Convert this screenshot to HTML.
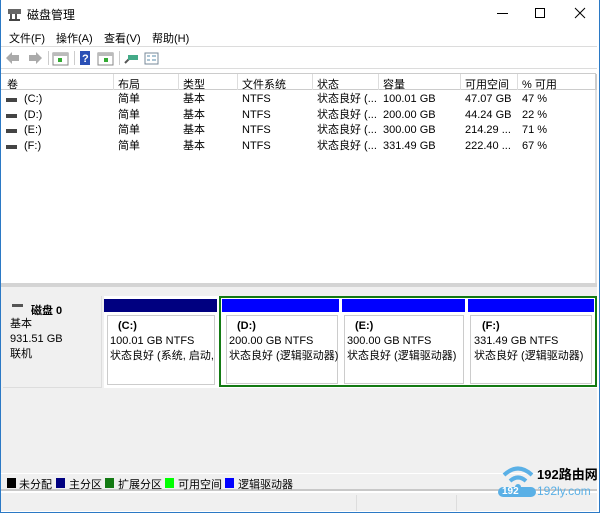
<!DOCTYPE html>
<html><head><meta charset="utf-8"><style>
*{margin:0;padding:0;box-sizing:border-box}
body{width:600px;height:513px;overflow:hidden;background:#fff;font-family:"Liberation Sans","Noto Sans CJK SC",sans-serif;font-size:11px;color:#000;position:relative}
.a{position:absolute}
.t{white-space:nowrap}
</style></head><body>
<div class="a" style="left:0;top:0;width:600px;height:513px;border:1px solid #2b79c5;border-top:none"></div>
<!-- title -->
<svg class="a" style="left:7px;top:8px" width="16" height="14"><rect x="1" y="1" width="13" height="5" fill="#666"/><rect x="3" y="6" width="2" height="6" fill="#555"/><rect x="8" y="6" width="2" height="6" fill="#555"/><rect x="2" y="11" width="11" height="2" fill="#444"/></svg>
<div class="a t" style="left:27px;top:6px;font-size:12px">磁盘管理</div>
<div class="a" style="left:497px;top:13px;width:11px;height:1px;background:#000"></div>
<div class="a" style="left:535px;top:8px;width:10px;height:10px;border:1px solid #000"></div>
<svg class="a" style="left:574px;top:7px" width="12" height="12"><path d="M1 1L11 11M11 1L1 11" stroke="#000" stroke-width="1"/></svg>
<!-- menu -->
<div class="a t" style="left:9px;top:30px">文件(F)</div>
<div class="a t" style="left:56px;top:30px">操作(A)</div>
<div class="a t" style="left:104px;top:30px">查看(V)</div>
<div class="a t" style="left:152px;top:30px">帮助(H)</div>
<div class="a" style="left:1px;top:46px;width:596px;height:23px;background:#fff;border-top:1px solid #dcdcdc;border-bottom:1px solid #dcdcdc"></div>
<!-- toolbar -->
<svg class="a" style="left:4px;top:50px" width="160" height="16">
<path d="M2 8 L8 2 L8 5 L15 5 L15 11 L8 11 L8 14Z" fill="#aaa"/>
<path d="M38 8 L32 2 L32 5 L25 5 L25 11 L32 11 L32 14Z" fill="#aaa"/>
<rect x="44" y="1" width="1" height="14" fill="#ccc"/>
<rect x="49" y="3" width="15" height="12" fill="#fff" stroke="#888"/><rect x="49" y="3" width="15" height="3" fill="#bbb"/><rect x="54" y="8" width="4" height="4" fill="#3a3"/>
<rect x="70" y="1" width="1" height="14" fill="#ccc"/>
<rect x="76" y="1" width="10" height="14" fill="#2a4fb5"/><text x="78" y="12" fill="#fff" font-size="11" font-weight="bold">?</text>
<rect x="94" y="3" width="15" height="12" fill="#fff" stroke="#888"/><rect x="94" y="3" width="15" height="3" fill="#bbb"/><rect x="100" y="8" width="4" height="4" fill="#3a3"/>
<rect x="115" y="1" width="1" height="14" fill="#ccc"/>
<path d="M121 13 L126 8" stroke="#555" stroke-width="2"/><rect x="124" y="5" width="10" height="5" fill="#4a8"/>
<rect x="141" y="3" width="13" height="11" fill="#fff" stroke="#789"/><path d="M143 6h3M143 10h3M148 6h4M148 10h4" stroke="#58a"/>
</svg>
<!-- list header -->
<div class="a" style="left:1px;top:73px;width:595px;height:17px;border:1px solid #ccc;border-left:none;border-right:none"></div>
<div class="a t" style="left:7px;top:76px">卷</div>
<div class="a t" style="left:118px;top:76px">布局</div>
<div class="a t" style="left:183px;top:76px">类型</div>
<div class="a t" style="left:242px;top:76px">文件系统</div>
<div class="a t" style="left:317px;top:76px">状态</div>
<div class="a t" style="left:383px;top:76px">容量</div>
<div class="a t" style="left:465px;top:76px">可用空间</div>
<div class="a t" style="left:522px;top:76px">% 可用</div>
<div class="a" style="left:113px;top:74px;width:1px;height:16px;background:#ddd"></div>
<div class="a" style="left:178px;top:74px;width:1px;height:16px;background:#ddd"></div>
<div class="a" style="left:237px;top:74px;width:1px;height:16px;background:#ddd"></div>
<div class="a" style="left:312px;top:74px;width:1px;height:16px;background:#ddd"></div>
<div class="a" style="left:378px;top:74px;width:1px;height:16px;background:#ddd"></div>
<div class="a" style="left:460px;top:74px;width:1px;height:16px;background:#ddd"></div>
<div class="a" style="left:517px;top:74px;width:1px;height:16px;background:#ddd"></div>
<div class="a" style="left:595px;top:74px;width:2px;height:16px;background:#ccc"></div>
<!-- rows -->
<div class="a" style="left:0;top:92px;line-height:15.6px">
<div style="position:relative;height:15.6px"><span class="a" style="left:6px;top:6px;width:11px;height:4px;background:#444"></span><span class="a t" style="left:24px">(C:)</span><span class="a t" style="left:118px">简单</span><span class="a t" style="left:183px">基本</span><span class="a t" style="left:242px">NTFS</span><span class="a t" style="left:317px">状态良好 (...</span><span class="a t" style="left:383px">100.01 GB</span><span class="a t" style="left:465px">47.07 GB</span><span class="a t" style="left:522px">47 %</span></div>
<div style="position:relative;height:15.6px"><span class="a" style="left:6px;top:6px;width:11px;height:4px;background:#444"></span><span class="a t" style="left:24px">(D:)</span><span class="a t" style="left:118px">简单</span><span class="a t" style="left:183px">基本</span><span class="a t" style="left:242px">NTFS</span><span class="a t" style="left:317px">状态良好 (...</span><span class="a t" style="left:383px">200.00 GB</span><span class="a t" style="left:465px">44.24 GB</span><span class="a t" style="left:522px">22 %</span></div>
<div style="position:relative;height:15.6px"><span class="a" style="left:6px;top:6px;width:11px;height:4px;background:#444"></span><span class="a t" style="left:24px">(E:)</span><span class="a t" style="left:118px">简单</span><span class="a t" style="left:183px">基本</span><span class="a t" style="left:242px">NTFS</span><span class="a t" style="left:317px">状态良好 (...</span><span class="a t" style="left:383px">300.00 GB</span><span class="a t" style="left:465px">214.29 ...</span><span class="a t" style="left:522px">71 %</span></div>
<div style="position:relative;height:15.6px"><span class="a" style="left:6px;top:6px;width:11px;height:4px;background:#444"></span><span class="a t" style="left:24px">(F:)</span><span class="a t" style="left:118px">简单</span><span class="a t" style="left:183px">基本</span><span class="a t" style="left:242px">NTFS</span><span class="a t" style="left:317px">状态良好 (...</span><span class="a t" style="left:383px">331.49 GB</span><span class="a t" style="left:465px">222.40 ...</span><span class="a t" style="left:522px">67 %</span></div>
</div>
<div class="a" style="left:595px;top:90px;width:2px;height:193px;background:#e0e0e0"></div>
<!-- lower pane -->
<div class="a" style="left:1px;top:283px;width:596px;height:4px;background:#d4d4d4"></div>
<div class="a" style="left:1px;top:287px;width:596px;height:186px;background:#f0f0f0"></div>
<div class="a" style="left:3px;top:296px;width:99px;height:92px;background:#f0f0f0;border-right:1px solid #ddd;border-bottom:1px solid #ddd"></div>
<div class="a" style="left:12px;top:304px;width:11px;height:3px;background:#555"></div>
<div class="a t" style="left:31px;top:302px;font-weight:bold">磁盘 0</div>
<div class="a t" style="left:10px;top:317px;line-height:15px">基本<br>931.51 GB<br>联机</div>
<div class="a" style="left:104px;top:296px;width:493px;height:92px;background:#fff"></div>
<!-- C -->
<div class="a" style="left:104px;top:299px;width:113px;height:13px;background:#000080"></div>
<div class="a" style="left:107px;top:315px;width:108px;height:70px;border:1px solid #ccc;background:#fff"></div>
<div class="a t" style="left:118px;top:320px;font-weight:bold">(C:)</div>
<div class="a t" style="left:110px;top:334px;line-height:15px">100.01 GB NTFS<br>状态良好 (系统, 启动,</div>
<!-- extended -->
<div class="a" style="left:219px;top:296px;width:378px;height:91px;border:2px solid #137a13"></div>
<div class="a" style="left:222px;top:299px;width:117px;height:13px;background:#0000ff"></div>
<div class="a" style="left:342px;top:299px;width:123px;height:13px;background:#0000ff"></div>
<div class="a" style="left:468px;top:299px;width:126px;height:13px;background:#0000ff"></div>
<div class="a" style="left:226px;top:315px;width:112px;height:69px;border:1px solid #ccc"></div>
<div class="a" style="left:344px;top:315px;width:120px;height:69px;border:1px solid #ccc"></div>
<div class="a" style="left:470px;top:315px;width:122px;height:69px;border:1px solid #ccc"></div>
<div class="a t" style="left:237px;top:320px;font-weight:bold">(D:)</div>
<div class="a t" style="left:229px;top:334px;line-height:15px">200.00 GB NTFS<br>状态良好 (逻辑驱动器)</div>
<div class="a t" style="left:355px;top:320px;font-weight:bold">(E:)</div>
<div class="a t" style="left:347px;top:334px;line-height:15px">300.00 GB NTFS<br>状态良好 (逻辑驱动器)</div>
<div class="a t" style="left:482px;top:320px;font-weight:bold">(F:)</div>
<div class="a t" style="left:474px;top:334px;line-height:15px">331.49 GB NTFS<br>状态良好 (逻辑驱动器)</div>
<!-- legend -->
<div class="a" style="left:1px;top:473px;width:596px;height:1px;background:#fff"></div>
<div class="a" style="left:1px;top:474px;width:596px;height:17px;background:#f0f0f0;border-bottom:2px solid #c8c8c8"></div>
<div class="a" style="left:7px;top:478px;width:9px;height:10px;background:#000"></div>
<div class="a t" style="left:19px;top:476px">未分配</div>
<div class="a" style="left:56px;top:478px;width:9px;height:10px;background:#000080"></div>
<div class="a t" style="left:69px;top:476px">主分区</div>
<div class="a" style="left:105px;top:478px;width:9px;height:10px;background:#137a13"></div>
<div class="a t" style="left:118px;top:476px">扩展分区</div>
<div class="a" style="left:165px;top:478px;width:9px;height:10px;background:#00ff00"></div>
<div class="a t" style="left:178px;top:476px">可用空间</div>
<div class="a" style="left:225px;top:478px;width:9px;height:10px;background:#0000ff"></div>
<div class="a t" style="left:238px;top:476px">逻辑驱动器</div>
<!-- status -->
<div class="a" style="left:1px;top:493px;width:596px;height:18px;background:#f0f0f0"></div>
<div class="a" style="left:356px;top:495px;width:1px;height:16px;background:#ddd"></div>
<div class="a" style="left:456px;top:495px;width:1px;height:16px;background:#ddd"></div>
<!-- watermark -->
<svg class="a" style="left:500px;top:462px" width="36" height="32"><path d="M4 13 Q18 0 32 13" stroke="#5ab0e6" stroke-width="4" fill="none"/><path d="M10 19 Q18 12 26 19" stroke="#5ab0e6" stroke-width="4" fill="none"/><circle cx="18" cy="25" r="3" fill="#5ab0e6"/></svg>
<div class="a t" style="left:537px;top:464px;font-size:13px;font-weight:bold">192路由网</div>
<div class="a" style="left:498px;top:487px;width:38px;height:10px;border-radius:5px;background:#5ab0e6"></div>
<div class="a t" style="left:502px;top:486px;font-size:10px;color:#fff;font-weight:bold">192</div>
<div class="a t" style="left:537px;top:484px;font-size:12px;color:#5ab0e6">192ly.com</div>
</body></html>
